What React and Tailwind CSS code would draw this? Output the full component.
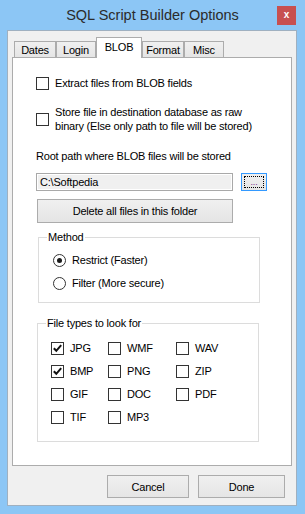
import { useState } from 'react';

const CheckBox = ({ checked }) => (
  <span className="w-[13px] h-[13px] shrink-0 border border-[#333333] bg-white flex items-center justify-center">
    {checked && (
      <svg width="11" height="11" viewBox="0 0 11 11">
        <path d="M1.8 5.2 L4.3 7.8 L9.2 2.2" fill="none" stroke="#111" strokeWidth="2" />
      </svg>
    )}
  </span>
);

const Radio = ({ checked }) => (
  <span className="w-[13px] h-[13px] shrink-0 rounded-full border border-[#333333] bg-white flex items-center justify-center">
    {checked && <span className="w-[5px] h-[5px] rounded-full bg-[#1a1a1a]" />}
  </span>
);

const Tab = ({ label, active, width }) =>
  active ? (
    <div
      className={`${width} h-[21px] -mb-px relative z-10 bg-white border border-b-0 border-[#acacac] flex justify-center pt-[2px]`}
    >
      {label}
    </div>
  ) : (
    <div
      className={`${width} h-[16px] bg-gradient-to-b from-[#f0f0f0] to-[#e5e5e5] border border-b-0 border-[#acacac] flex items-center justify-center`}
    >
      {label}
    </div>
  );

const App = () => {
  const [fileTypes] = useState([
    { name: 'JPG', checked: true },
    { name: 'WMF', checked: false },
    { name: 'WAV', checked: false },
    { name: 'BMP', checked: true },
    { name: 'PNG', checked: false },
    { name: 'ZIP', checked: false },
    { name: 'GIF', checked: false },
    { name: 'DOC', checked: false },
    { name: 'PDF', checked: false },
    { name: 'TIF', checked: false },
    { name: 'MP3', checked: false },
  ]);

  const btn =
    'border border-[#acacac] bg-gradient-to-b from-[#f0f0f0] to-[#e5e5e5] flex items-center justify-center';

  return (
    <div className="w-[305px] h-[514px] bg-[#8cc6f5] flex flex-col pl-[7px] pr-[8px] pb-[8px] font-['Liberation_Sans',Arial,sans-serif] text-[11px] leading-[14px] tracking-[-0.2px] text-black">
      {/* Title bar */}
      <div className="relative h-[30px] shrink-0 flex items-center justify-center pl-[1px]">
        <span className="text-[14.5px] tracking-normal text-[#2b2b2b] -mt-[1px]">SQL Script Builder Options</span>
        <div className="absolute right-[1px] top-[6px] w-[19px] h-[19px] bg-[#c75050] flex items-center justify-center text-white text-[10px] font-bold leading-none pb-[1px]">
          x
        </div>
      </div>

      {/* Client area */}
      <div className="flex-1 flex flex-col bg-[#f0f0f0] border border-[#9fb0c0] px-[4px]">
        {/* Tabs */}
        <div className="flex items-end h-[26px] pt-[6px] pl-[2px]">
          <Tab label="Dates" width="w-[42px]" />
          <Tab label="Login" width="w-[40px]" />
          <Tab label="BLOB" width="w-[46px]" active />
          <Tab label="Format" width="w-[42px]" />
          <Tab label="Misc" width="w-[40px]" />
        </div>

        {/* Panel */}
        <div className="flex-1 bg-white border border-[#acacac] flex flex-col pl-[23px] pt-[18px]">
          <div className="flex items-center gap-[6px] h-[14px]">
            <CheckBox />
            <span>Extract files from BLOB fields</span>
          </div>

          <div className="flex items-center gap-[6px] mt-[15px]">
            <CheckBox />
            <span>
              Store file in destination database as raw
              <br />
              binary (Else only path to file will be stored)
            </span>
          </div>

          <div className="mt-[16px]">Root path where BLOB files will be stored</div>

          <div className="flex items-center mt-[10px] h-[18px]">
            <div className="w-[197px] h-[18px] border border-[#a9a9a9] bg-[#f0f0f0] shadow-[inset_0_0_0_1px_#ffffff] flex items-center pl-[3px]">
              C:\Softpedia
            </div>
            <div className="ml-[8px] w-[26px] h-[18px] border border-[#3399ff] bg-gradient-to-b from-[#f0f0f0] to-[#e5e5e5] p-[2px]">
              <div className="w-full h-full border border-dotted border-black flex items-end justify-center text-[9px] leading-[9px] text-[#7a2a8a]">
                ...
              </div>
            </div>
          </div>

          <div className={`${btn} mt-[8px] ml-[1px] w-[196px] h-[24px]`}>Delete all files in this folder</div>

          <fieldset className="mt-[8px] ml-[2px] w-[222px] border border-[#dcdcdc] pl-[8px] pb-[12px]">
            <legend className="px-[1px] leading-[13px]">Method</legend>
            <div className="flex items-center gap-[6px] mt-[9px] ml-[6px] h-[14px]">
              <Radio checked />
              <span>Restrict (Faster)</span>
            </div>
            <div className="flex items-center gap-[6px] mt-[9px] ml-[6px] h-[14px]">
              <Radio />
              <span>Filter (More secure)</span>
            </div>
          </fieldset>

          <fieldset className="mt-[14px] ml-[1px] w-[222px] border border-[#dcdcdc] pl-[8px] pb-[17px]">
            <legend className="px-[1px] leading-[13px]">File types to look for</legend>
            <div className="grid grid-cols-[57px_68px_auto] gap-y-[9px] mt-[11px] ml-[5px]">
              {fileTypes.map((f) => (
                <div key={f.name} className="flex items-center gap-[6px] h-[14px]">
                  <CheckBox checked={f.checked} />
                  <span>{f.name}</span>
                </div>
              ))}
            </div>
          </fieldset>
        </div>

        {/* Buttons */}
        <div className="flex justify-end gap-[9px] pr-[7px] mt-[9px] mb-[7px]">
          <div className={`${btn} w-[82px] h-[23px]`}>Cancel</div>
          <div className={`${btn} w-[87px] h-[23px]`}>Done</div>
        </div>
      </div>
    </div>
  );
};

export default App;
